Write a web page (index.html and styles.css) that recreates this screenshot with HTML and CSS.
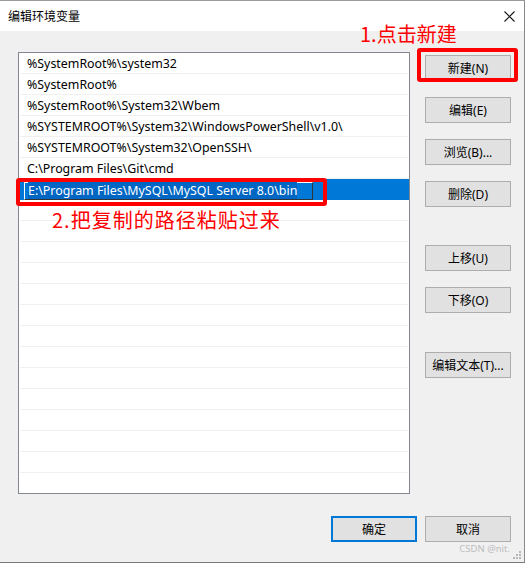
FILE: index.html
```html
<!DOCTYPE html>
<html>
  <head>
    <title>编辑环境变量</title>
    <meta charset='utf-8'>
    <link rel="stylesheet" href="styles.css">
  </head>
  <body>
    <div class='window'>
      <div class='titlebar'>
        <span class='title'>编辑环境变量</span>
        <svg class='close' width='11' height='11' viewBox='0 0 11 11'>
          <path d='M0.5 0.5 L10.5 10.5 M10.5 0.5 L0.5 10.5' stroke='#111' stroke-width='1.1' fill='none'/>
        </svg>
      </div>
      <div class='body'>
        <div class='list'>
          <div class='row'>%SystemRoot%\system32</div>
          <div class='row'>%SystemRoot%</div>
          <div class='row'>%SystemRoot%\System32\Wbem</div>
          <div class='row'>%SYSTEMROOT%\System32\WindowsPowerShell\v1.0\</div>
          <div class='row'>%SYSTEMROOT%\System32\OpenSSH\</div>
          <div class='row'>C:\Program Files\Git\cmd</div>
          <div class='row selected'>
            <div class='editbox'><span class='sel'>E:\Program Files\MySQL\MySQL Server 8.0\bin</span></div>
          </div>
          <div class='row'></div>
          <div class='row'></div>
          <div class='row'></div>
          <div class='row'></div>
          <div class='row'></div>
          <div class='row'></div>
          <div class='row'></div>
          <div class='row'></div>
          <div class='row'></div>
          <div class='row'></div>
          <div class='row'></div>
          <div class='row'></div>
          <div class='row'></div>
          <div class='row last'></div>
        </div>
        <div class='side'>
          <button class='btn'>新建(N)</button>
          <button class='btn'>编辑(E)</button>
          <button class='btn'>浏览(B)...</button>
          <button class='btn'>删除(D)</button>
          <button class='btn gap-big'>上移(U)</button>
          <button class='btn'>下移(O)</button>
          <button class='btn gap-big2'>编辑文本(T)...</button>
        </div>
      </div>
      <div class='footer'>
        <button class='btn default'>确定</button>
        <button class='btn'>取消</button>
      </div>
      <div class='watermark'>CSDN @nit.</div>
      <svg class='grip' width='9' height='9' viewBox='0 0 9 9'>
        <rect x='6' y='0' width='2' height='2' fill='#b8b8b8'/>
        <rect x='3' y='3' width='2' height='2' fill='#b8b8b8'/>
        <rect x='6' y='3' width='2' height='2' fill='#b8b8b8'/>
        <rect x='0' y='6' width='2' height='2' fill='#b8b8b8'/>
        <rect x='3' y='6' width='2' height='2' fill='#b8b8b8'/>
        <rect x='6' y='6' width='2' height='2' fill='#b8b8b8'/>
      </svg>
      <div class='taskbar-edge'></div>

      <!-- annotations drawn over the dialog -->
      <div class='note note-1'>1.点击新建</div>
      <div class='mark mark-1'></div>
      <div class='mark mark-2'></div>
      <div class='note note-2'>2.把复制的路径粘贴过来</div>
    </div>
  </body>
</html>
```

FILE: styles.css
```css
body {
  margin: 0;
  padding: 0;
  background: #fff;
  font-family: "Noto Sans", "Noto Sans CJK SC", sans-serif;
  font-size: 12px;
  color: #000;
}

.window {
  position: relative;
  width: 524px;
  height: 561px;
  border-top: 1px solid #9a9a9a;
  border-right: 1px solid #8a8a8a;
  border-bottom: 1px solid #7a7a7a;
  background: #f0f0f0;
  display: flex;
  flex-direction: column;
  overflow: hidden;
}

/* Title bar */
.titlebar {
  height: 30px;
  background: #fff;
  display: flex;
  align-items: center;
  justify-content: space-between;
  padding: 0 9px 0 8px;
}
.title {
  font-family: "Noto Sans CJK SC", sans-serif;
  font-size: 12px;
  margin-top: -1px;
}
.close {
  display: block;
}

/* List and side buttons */
.body {
  display: flex;
  padding: 21px 0 0 18px;
}
.list {
  width: 390px;
  height: 440px;
  border: 1px solid #828790;
  background: #fff;
  overflow: hidden;
}
.row {
  height: 21px;
  margin: 0 1px;
  box-sizing: border-box;
  border-bottom: 1px solid #f0f0f0;
  padding: 1px 0 0 7px;
  font-size: 12.4px;
  line-height: 20px;
  white-space: nowrap;
}
.row.selected {
  margin: 0;
  background: #0078d7;
  border-bottom: none;
  padding: 3px 0 0 5px;
}
.editbox {
  width: 284px;
  height: 16px;
  border: 1px solid #fff;
  border-right-color: #333;
  border-bottom-color: #333;
  line-height: 16px;
  padding-left: 3px;
  box-sizing: content-box;
}
.sel {
  color: #fff;
  background: #0066c4;
}

.side {
  display: flex;
  flex-direction: column;
  gap: 16px;
  margin: 3px 0 0 15px;
}
.btn {
  width: 86px;
  height: 26px;
  background: #e1e1e1;
  border: 1px solid #adadad;
  font-family: "Noto Sans", "Noto Sans CJK SC", sans-serif;
  font-size: 12px;
  color: #000;
  padding: 0;
}
.gap-big { margin-top: 22px; }
.gap-big2 { margin-top: 23px; }

.footer {
  display: flex;
  justify-content: flex-end;
  gap: 8px;
  padding: 22px 13px 0 0;
}
.btn.default {
  border: 2px solid #0078d7;
}

.watermark {
  position: absolute;
  right: 14px;
  bottom: 7px;
  font-size: 9.5px;
  color: #bdbdbd;
}
.grip {
  position: absolute;
  right: 2px;
  bottom: 2px;
}
.taskbar-edge {
  position: absolute;
  left: 0;
  bottom: -1px;
  width: 64px;
  height: 1px;
  background: #176a72;
}

/* Red annotations */
.note {
  position: absolute;
  color: #f00;
  font-family: "Noto Sans CJK SC", sans-serif;
  font-size: 20px;
  line-height: 24px;
}
.note-1 { left: 360px; top: 21px; }
.note-2 { left: 52px; top: 207px; letter-spacing: 1px; }
.mark {
  position: absolute;
  border: 4px solid #f00;
  border-radius: 3px;
  box-sizing: border-box;
}
.mark-1 { left: 417px; top: 47px; width: 101px; height: 34px; }
.mark-2 { left: 16px; top: 177px; width: 311px; height: 28px; }
```
